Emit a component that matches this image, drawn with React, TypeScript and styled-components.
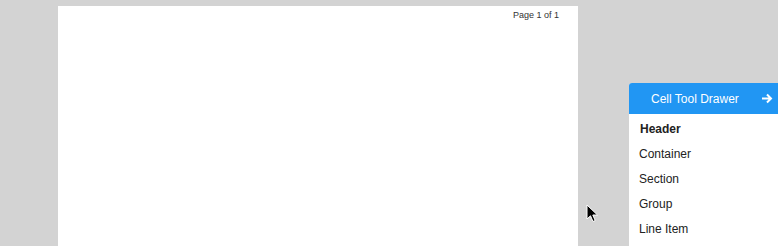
import React from "react";
import styled, { createGlobalStyle } from "styled-components";

const Global = createGlobalStyle`
  html, body {
    margin: 0;
    padding: 0;
    background: #d3d3d3;
    overflow: hidden;
    font-family: "Liberation Sans", Arial, Helvetica, sans-serif;
  }
  #root { width: 778px; height: 246px; overflow: hidden; }
`;

const Stage = styled.div`
  position: relative;
  width: 778px;
  height: 246px;
  display: flex;
  align-items: flex-start;
  overflow: hidden;
`;

const Paper = styled.div`
  flex: none;
  width: 520px;
  height: 260px;
  margin: 6px 0 0 58px;
  background: #ffffff;
  display: flex;
  justify-content: flex-end;
  padding: 4px 19px 0 0;
  box-sizing: border-box;
`;

const PageNum = styled.span`
  font-size: 9px;
  line-height: 11px;
  color: #333;
`;

const Drawer = styled.div`
  flex: none;
  width: 149px;
  margin: 83px 0 0 51px;
  height: 180px;
  background: #ffffff;
  border-top-left-radius: 3px;
  overflow: hidden;
`;

const DrawerHead = styled.div`
  height: 31px;
  background: #2196f3;
  color: #fff;
  display: flex;
  align-items: center;
  padding: 0 5px 0 22px;
  font-size: 12px;
`;

const HeadTitle = styled.span`
  flex: 1;
`;

const Items = styled.ul`
  list-style: none;
  margin: 0;
  padding: 3px 0 0 10px;
`;

const Item = styled.li<{ $bold?: boolean }>`
  height: 25px;
  line-height: 25px;
  font-size: 12px;
  color: #222;
  font-weight: ${(p) => (p.$bold ? 700 : 400)};
  padding-left: ${(p) => (p.$bold ? 1 : 0)}px;
`;

const Cursor = styled.svg`
  position: absolute;
  left: 586px;
  top: 204px;
`;

export default function App() {
  return (
    <>
      <Global />
      <Stage>
        <Paper>
          <PageNum>Page 1 of 1</PageNum>
        </Paper>
        <Drawer>
          <DrawerHead>
            <HeadTitle>Cell Tool Drawer</HeadTitle>
            <svg width="12" height="11" viewBox="0 0 12 11">
              <path d="M1 5.5H10M6 1.5L10 5.5L6 9.5" stroke="#fff" strokeWidth="2" fill="none" />
            </svg>
          </DrawerHead>
          <Items>
            <Item $bold>Header</Item>
            <Item>Container</Item>
            <Item>Section</Item>
            <Item>Group</Item>
            <Item>Line Item</Item>
          </Items>
        </Drawer>
        <Cursor width="13" height="19" viewBox="0 0 13 19">
          <path d="M1 1L1 15L4.5 11.8L7 17.5L9.2 16.5L6.8 11L11.5 11Z" fill="#000" stroke="#fff" strokeWidth="1" strokeLinejoin="round" />
        </Cursor>
      </Stage>
    </>
  );
}
